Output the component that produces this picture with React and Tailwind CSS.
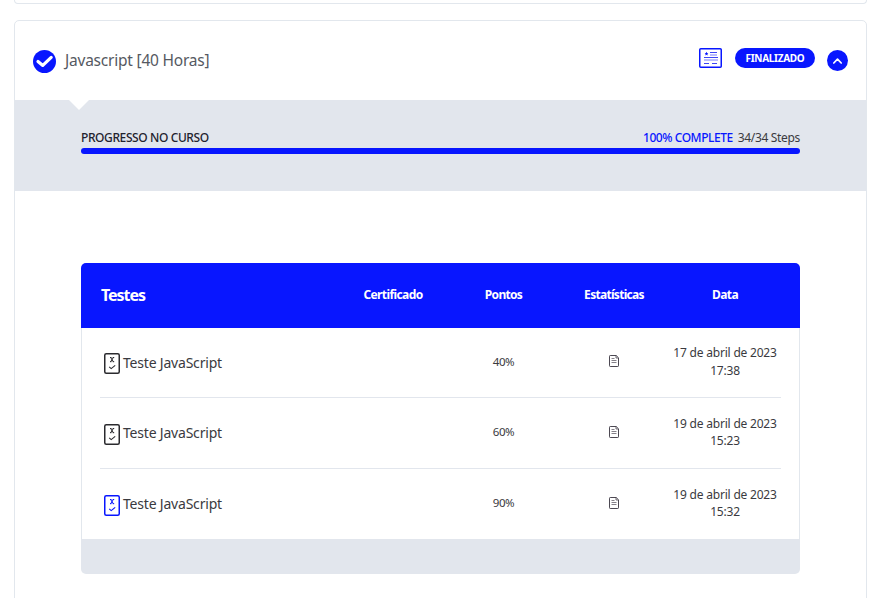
const rows = [
  { score: '40%', date: '17 de abril de 2023', time: '17:38', passed: false, height: 'h-[70px]' },
  { score: '60%', date: '19 de abril de 2023', time: '15:23', passed: false, height: 'h-[71px]' },
  { score: '90%', date: '19 de abril de 2023', time: '15:32', passed: true, height: 'h-[70px]' },
];

const columns = 'grid grid-cols-[238px_110px_111px_110px_112px] items-center';

function CheckIcon() {
  return (
    <svg className="mt-0.5 size-[23px] shrink-0" viewBox="0 0 23 23" fill="none">
      <circle cx="11.5" cy="11.5" r="11.5" fill="#0816ff" />
      <path d="M5 11.4l4.8 4L18.2 7.4" stroke="#fff" strokeWidth="3.2" strokeLinecap="round" strokeLinejoin="round" />
    </svg>
  );
}

function CertificateIcon() {
  return (
    <svg className="h-5 w-[23px]" viewBox="0 0 23 20" fill="none">
      <rect x="0.75" y="0.75" width="21.5" height="18.5" rx="1" stroke="#0816ff" strokeWidth="1.5" />
      <path d="M7.5 3.8l.6 1.2 1.2.2-.9.9.3 1.3-1.2-.6-1.2.6.3-1.3-.9-.9 1.2-.2z" fill="#0816ff" />
      <path d="M11 4.5h7M5 9.5h14M5 15.5h5M13 15.5h5" stroke="#3d46f5" strokeWidth="1" />
      <path d="M11 7h7M5 12h14" stroke="#babdff" strokeWidth="2" />
    </svg>
  );
}

function QuizIcon({ passed }) {
  return (
    <svg className={`mt-[3px] h-[22px] w-4 shrink-0 ${passed ? 'text-[#0816ff]' : 'text-[#2a2a2e]'}`} viewBox="0 0 16 22" fill="none" stroke="currentColor">
      <rect x="0.75" y="0.75" width="14.5" height="19.5" rx="1.5" strokeWidth="1.5" />
      <path d="M6.5 4.3l3 4.6M9.5 4.3l-3 4.6M6 4.5h1.5M8.7 4.5h1.5M6 8.7h1.5M8.7 8.7h1.5" strokeWidth="1" />
      <path d="M5.2 13.8l2 1.8 4-3.2" strokeWidth="1.1" />
    </svg>
  );
}

function DocumentIcon() {
  return (
    <svg className="mr-px mb-[3px] h-3 w-[10px]" viewBox="0 0 10 12" fill="none" stroke="#4c4852">
      <path d="M.5 1.2q0-.7.7-.7h6L9.5 2.8v8q0 .7-.7.7H1.2q-.7 0-.7-.7z" />
      <path d="M7 .5v2.5h2.5" strokeWidth=".8" />
      <path d="M2.5 3.5h3M2.5 5.5h5M2.5 7.5h5" stroke="#77737c" strokeWidth=".9" />
    </svg>
  );
}

export default function App() {
  return (
    <main className="h-[598px] w-[869px] overflow-hidden bg-white pl-[14px] font-['Noto_Sans',sans-serif] text-[#3a3a40]">
      <div className="h-1 w-[853px] rounded-b-[5px] border border-t-0 border-[#e2e7ed]" />
      <section className="mt-4 h-[590px] w-[853px] rounded-[5px] border border-[#e2e7ed]">
        <header className="flex h-[79px] items-center px-[18px]">
          <CheckIcon />
          <h2 className="mb-px ml-[9px] text-[15.5px] leading-6 tracking-[-0.22px] text-[#555962]">Javascript [40 Horas]</h2>
          <div className="mb-[5px] ml-auto flex items-center">
            <CertificateIcon />
            <span className="ml-[13px] flex h-5 w-20 items-center justify-center rounded-full bg-[#0816ff] text-[10px] font-bold tracking-[-0.3px] text-white">FINALIZADO</span>
            <button className="mt-[5px] ml-3 flex size-[21px] items-center justify-center rounded-full bg-[#0816ff]" aria-label="Recolher">
              <svg className="size-[21px]" viewBox="0 0 21 21" fill="none">
                <path d="M6.8 13l3.7-3.8 3.7 3.8" stroke="#fff" strokeWidth="1.7" strokeLinecap="round" strokeLinejoin="round" />
              </svg>
            </button>
          </div>
        </header>
        <div className="relative h-[91px] bg-[#e2e6ed] px-[66px] pt-7">
          <span className="absolute top-0 left-[54px] size-0 border-x-10 border-t-10 border-x-transparent border-t-white" />
          <div className="mb-px flex h-[19px] items-center justify-between text-[12px] whitespace-nowrap">
            <span className="font-medium tracking-[-0.4px] text-[#22222e]">PROGRESSO NO CURSO</span>
            <span className="flex">
              <span className="font-medium tracking-[-0.45px] text-[#0816ff]">100% COMPLETE</span>
              <span className="ml-[5px] tracking-[-0.33px]">34/34 Steps</span>
            </span>
          </div>
          <div className="h-[6px] rounded-full bg-[#0816ff]" />
        </div>
        <div className="mx-[66px] mt-[72px]">
          <div className={`${columns} h-[65px] rounded-t-[5px] bg-[#0816ff] px-[19px] pb-0.5 text-center text-[12px] font-bold text-white`}>
            <span className="pl-px text-left text-[16px] tracking-[-1.05px]">Testes</span>
            <span className="tracking-[-0.6px]">Certificado</span>
            <span className="tracking-[-0.7px]">Pontos</span>
            <span className="tracking-[-0.7px]">Estatísticas</span>
            <span className="tracking-[-0.6px]">Data</span>
          </div>
          <div className="border-x border-[#e2e7ed] px-[18px]">
            {rows.map((row, i) => (
              <div key={i} className={`${columns} ${row.height} ${i < 2 ? 'border-b border-[#e2e6ed]' : ''} text-center text-[12px]`}>
                <span className="flex items-center pl-1 text-[14px] tracking-[-0.2px]">
                  <QuizIcon passed={row.passed} />
                  <span className="mb-px ml-[3px]">Teste JavaScript</span>
                </span>
                <span />
                <span className="mb-0.5 text-[11.5px] tracking-[-0.4px]">{row.score}</span>
                <span className="flex justify-center"><DocumentIcon /></span>
                <span className="mb-0.5 leading-[17.5px] tracking-[-0.2px] whitespace-nowrap">{row.date}<br />{row.time}</span>
              </div>
            ))}
          </div>
          <div className="h-[35px] rounded-b-[5px] bg-[#e2e6ed]" />
        </div>
      </section>
    </main>
  );
}
